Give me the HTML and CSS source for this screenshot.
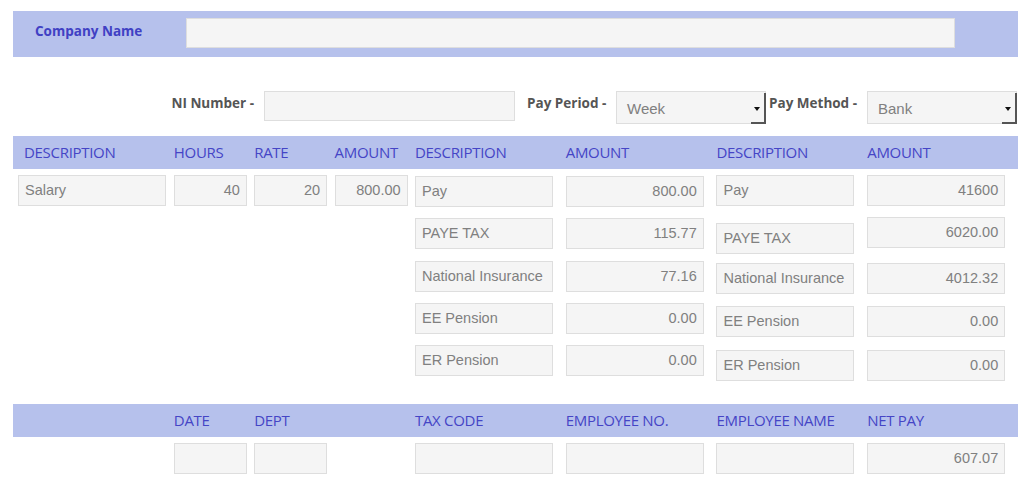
FILE: index.html
```html
<!DOCTYPE html>
<html>
<head>
<meta charset="utf-8">
<link rel="stylesheet" href="styles.css">
</head>
<body>
<div class="page">
  <div class="company-bar">
    <label class="company-label">Company Name</label>
    <div class="field company-field"></div>
  </div>

  <div class="meta-row">
    <label class="meta-label ni-label">NI Number -</label>
    <div class="field ni-field"></div>
    <label class="meta-label period-label">Pay Period -</label>
    <div class="select period-select"><span>Week</span><span class="arrow"></span></div>
    <label class="meta-label method-label">Pay Method -</label>
    <div class="select method-select"><span>Bank</span><span class="arrow"></span></div>
  </div>

  <div class="band grid">
    <div class="hd first">DESCRIPTION</div>
    <div class="hd">HOURS</div>
    <div class="hd">RATE</div>
    <div class="hd">AMOUNT</div>
    <div class="hd">DESCRIPTION</div>
    <div class="hd">AMOUNT</div>
    <div class="hd">DESCRIPTION</div>
    <div class="hd">AMOUNT</div>
  </div>

  <div class="body grid">
    <div class="col first"><div class="field w148">Salary</div></div>
    <div class="col"><div class="field w73 num">40</div></div>
    <div class="col"><div class="field w73 num">20</div></div>
    <div class="col"><div class="field w73 num">800.00</div></div>
    <div class="col stack mid">
      <div class="field w138">Pay</div>
      <div class="field w138">PAYE TAX</div>
      <div class="field w138">National Insurance</div>
      <div class="field w138">EE Pension</div>
      <div class="field w138">ER Pension</div>
    </div>
    <div class="col stack mid">
      <div class="field w138 num">800.00</div>
      <div class="field w138 num">115.77</div>
      <div class="field w138 num">77.16</div>
      <div class="field w138 num">0.00</div>
      <div class="field w138 num">0.00</div>
    </div>
    <div class="col stack right">
      <div class="field w138">Pay</div>
      <div class="field w138 down">PAYE TAX</div>
      <div class="field w138">National Insurance</div>
      <div class="field w138">EE Pension</div>
      <div class="field w138">ER Pension</div>
    </div>
    <div class="col stack right">
      <div class="field w138 num">41600</div>
      <div class="field w138 num up">6020.00</div>
      <div class="field w138 num">4012.32</div>
      <div class="field w138 num">0.00</div>
      <div class="field w138 num">0.00</div>
    </div>
  </div>

  <div class="band grid bottom-band">
    <div class="hd first"></div>
    <div class="hd">DATE</div>
    <div class="hd">DEPT</div>
    <div class="hd"></div>
    <div class="hd">TAX CODE</div>
    <div class="hd">EMPLOYEE NO.</div>
    <div class="hd">EMPLOYEE NAME</div>
    <div class="hd">NET PAY</div>
  </div>

  <div class="foot grid">
    <div class="col first"></div>
    <div class="col"><div class="field w73"></div></div>
    <div class="col"><div class="field w73"></div></div>
    <div class="col"></div>
    <div class="col"><div class="field w138"></div></div>
    <div class="col"><div class="field w138"></div></div>
    <div class="col"><div class="field w138"></div></div>
    <div class="col"><div class="field w138 num">607.07</div></div>
  </div>
</div>
</body>
</html>
```
FILE: styles.css
```css
html, body {
  margin: 0;
  padding: 0;
  background: #ffffff;
}

.page {
  width: 1005px;
  margin-left: 13px;
  padding-top: 11px;
  font-family: "Liberation Sans", Arial, sans-serif;
}

.field {
  box-sizing: border-box;
  height: 31px;
  background: #f5f5f5;
  border: 1px solid #dedede;
  color: #808080;
  font-size: 14.5px;
  line-height: 29px;
  padding: 0 6px 0 6px;
  white-space: nowrap;
  overflow: hidden;
}

.field.num {
  text-align: right;
}

.company-bar {
  height: 46px;
  background: #b6c1ec;
  display: flex;
  align-items: center;
}

.company-label {
  width: 173px;
  box-sizing: border-box;
  padding-left: 22px;
  font-family: "Open Sans", sans-serif;
  font-weight: 700;
  font-size: 13.5px;
  color: #4040c4;
  margin-top: -6px;
}

.company-field {
  width: 769px;
  height: 30px;
  margin-top: -2px;
}

.meta-row {
  margin-top: 34px;
  height: 33px;
  display: flex;
  align-items: flex-start;
}

.meta-label {
  font-family: "Open Sans", sans-serif;
  font-weight: 700;
  font-size: 13.5px;
  color: #555555;
  line-height: 18px;
  padding-top: 3px;
  white-space: nowrap;
}

.ni-label {
  width: 241px;
  text-align: right;
}

.ni-field {
  width: 251px;
  height: 30px;
  margin-left: 10px;
}

.period-label {
  margin-left: 12px;
  width: 89px;
}

.select {
  box-sizing: border-box;
  position: relative;
  width: 150px;
  height: 33px;
  margin-top: 0;
  background: #f5f5f5;
  border: 1px solid #dedede;
  color: #808080;
  font-size: 15px;
  line-height: 33px;
  padding-left: 10px;
}

.select .arrow {
  position: absolute;
  right: -1px;
  top: 1px;
  width: 15px;
  height: 31px;
  box-sizing: border-box;
  border-right: 2px solid #555555;
  border-bottom: 2px solid #555555;
}

.select .arrow::after {
  content: "";
  position: absolute;
  left: 3px;
  top: 14px;
  border-left: 3.5px solid transparent;
  border-right: 3.5px solid transparent;
  border-top: 4px solid #111111;
}

.method-label {
  margin-left: 3px;
  width: 98px;
}

.grid {
  display: grid;
  grid-template-columns: 16% 8% 8% 8% 15% 15% 15% 15%;
}

.band {
  height: 33px;
  background: #b6c1ec;
  margin-top: 12px;
  align-items: center;
}

.hd {
  font-family: "Open Sans", sans-serif;
  font-size: 15px;
  color: #4545c6;
  white-space: nowrap;
  letter-spacing: -0.3px;
  margin-top: -2px;
}

.hd.first {
  padding-left: 11px;
}

.body {
  margin-top: 6px;
  align-items: start;
}

.col.first {
  padding-left: 5px;
}

.stack {
  display: flex;
  flex-direction: column;
}

.stack.mid {
  gap: 11.3px;
}

.stack.mid .field:first-child {
  margin-top: 1px;
}

.stack.right {
  gap: 12.75px;
}

.stack.right .field.down {
  margin-top: 4px;
  margin-bottom: -4px;
}

.stack.right .field.up {
  margin-top: -2px;
  margin-bottom: 2px;
}

.w148 { width: 148px; }
.w73 { width: 73px; }
.w138 { width: 138px; }

.bottom-band {
  margin-top: 23px;
}

.foot {
  margin-top: 6px;
}

.foot .field {
  height: 31px;
}
```
